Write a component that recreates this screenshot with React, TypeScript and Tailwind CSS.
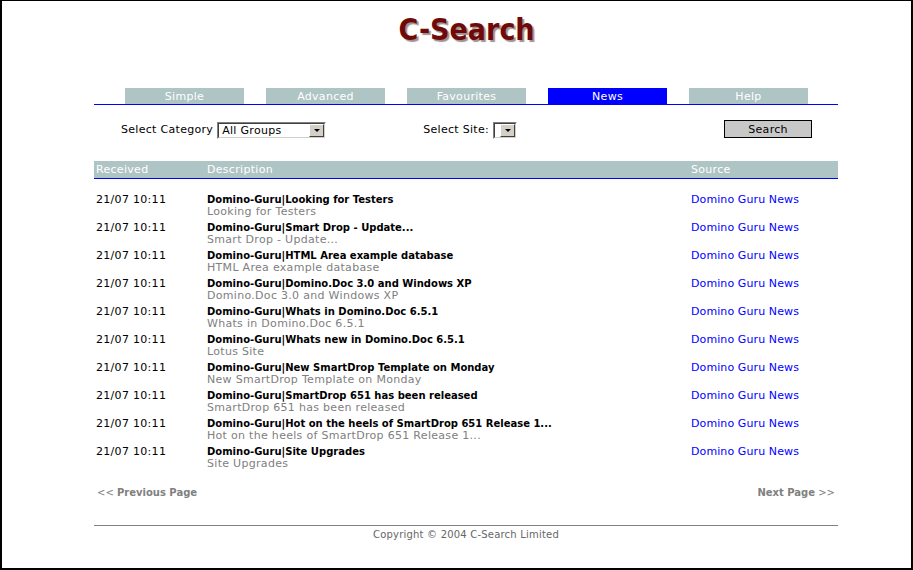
const tabs = ["Simple", "Advanced", "Favourites", "News", "Help"];

const rows = [
  ["Domino-Guru|Looking for Testers", "Looking for Testers"],
  ["Domino-Guru|Smart Drop - Update...", "Smart Drop - Update..."],
  ["Domino-Guru|HTML Area example database", "HTML Area example database"],
  ["Domino-Guru|Domino.Doc 3.0 and Windows XP", "Domino.Doc 3.0 and Windows XP"],
  ["Domino-Guru|Whats in Domino.Doc 6.5.1", "Whats in Domino.Doc 6.5.1"],
  ["Domino-Guru|Whats new in Domino.Doc 6.5.1", "Lotus Site"],
  ["Domino-Guru|New SmartDrop Template on Monday", "New SmartDrop Template on Monday"],
  ["Domino-Guru|SmartDrop 651 has been released", "SmartDrop 651 has been released"],
  ["Domino-Guru|Hot on the heels of SmartDrop 651 Release 1...", "Hot on the heels of SmartDrop 651 Release 1..."],
  ["Domino-Guru|Site Upgrades", "Site Upgrades"],
];

const Dropdown = ({ value, width }: { value: string; width: string }) => (
  <div
    className={`flex h-[17px] ${width} border border-t-[#808080] border-l-[#808080] border-r-white border-b-white`}
  >
    <div className="flex flex-1 items-center border border-t-[#404040] border-l-[#404040] border-r-[#d4d0c8] border-b-[#d4d0c8] bg-white pl-[3px] text-[11px] leading-none tracking-[0.3px] text-black">
      <span className="flex-1 truncate">{value}</span>
      <div className="flex h-full w-[15px] items-center justify-center border border-t-white border-l-white border-r-[#404040] border-b-[#404040] bg-[#d4d0c8]">
        <div className="h-0 w-0 border-x-[3px] border-t-[3px] border-x-transparent border-t-black" />
      </div>
    </div>
  </div>
);

export default function App() {
  return (
    <div
      className="h-[570px] w-[913px] overflow-hidden border-2 border-t border-black bg-white"
      style={{ fontFamily: '"DejaVu Sans", Verdana, sans-serif' }}
    >
      <h1
        className="mt-[11px] pl-[20px] text-center text-[30px] font-bold leading-[36px] text-[#6e0a0a] [text-shadow:2px_2px_1px_#a09090]"
        style={{ fontFamily: '"DejaVu Sans Condensed", "DejaVu Sans", sans-serif' }}
      >
        C-Search
      </h1>

      <div className="ml-[92px] w-[744px]">
        {/* tabs */}
        <div className="mt-[40px] flex gap-[22px] pl-[31px]">
          {tabs.map((t) => (
            <div
              key={t}
              className={`flex h-[16px] w-[119px] items-center justify-center pt-px text-[11px] leading-none tracking-[0.3px] text-white ${
                t === "News" ? "bg-[#0000ff]" : "bg-[#afc4c4]"
              }`}
            >
              {t}
            </div>
          ))}
        </div>
        <div className="h-px bg-[#0000ff]" />

        {/* filters */}
        <div className="mt-[17px] flex h-[17px] items-center text-[11px] tracking-[0.3px] text-black">
          <span className="ml-[27px] mr-[4px]">Select Category</span>
          <Dropdown value="All Groups" width="w-[109px]" />
          <span className="ml-[97px] mr-[4px]">Select Site:</span>
          <Dropdown value="" width="w-[24px]" />
          <button className="ml-[207px] -mt-[3px] h-[18px] w-[88px] border border-black bg-[#c8c8c8] text-[11px] leading-none tracking-[0.3px] text-black">
            Search
          </button>
        </div>

        {/* table header */}
        <div className="mt-[22px] flex h-[17px] items-center bg-[#afc4c4] pt-[2px] text-[11px] tracking-[0.3px] text-white">
          <span className="w-[113px] pl-[2px]">Received</span>
          <span className="flex-1">Description</span>
          <span className="w-[147px]">Source</span>
        </div>
        <div className="h-px bg-[#0000ff]" />

        {/* rows */}
        <div className="mt-[15px] flex flex-col">
          {rows.map(([title, sub], i) => (
            <div key={i} className="flex h-[28px] text-[11px] leading-[12px] tracking-[0.3px]">
              <span className="w-[113px] pl-[2px] text-black">21/07 10:11</span>
              <div className="flex flex-1 flex-col">
                <span className="text-[10px] font-bold tracking-normal text-black">{title}</span>
                <span className="text-[#808080]">{sub}</span>
              </div>
              <span className="w-[147px] tracking-[0.1px] text-[#0000ff]">Domino Guru News</span>
            </div>
          ))}
        </div>

        {/* paging */}
        <div className="mt-[13px] flex justify-between px-[3px] text-[10px] leading-[12px] text-[#808080]">
          <span>
            &lt;&lt; <b>Previous Page</b>
          </span>
          <span>
            <b>Next Page</b> &gt;&gt;
          </span>
        </div>

        {/* footer */}
        <div className="mt-[26px] border-t border-[#808080] pt-[2px] text-center text-[10px] leading-[14px] tracking-[0.2px] text-[#666666]">
          Copyright © 2004 C-Search Limited
        </div>
      </div>
    </div>
  );
}
